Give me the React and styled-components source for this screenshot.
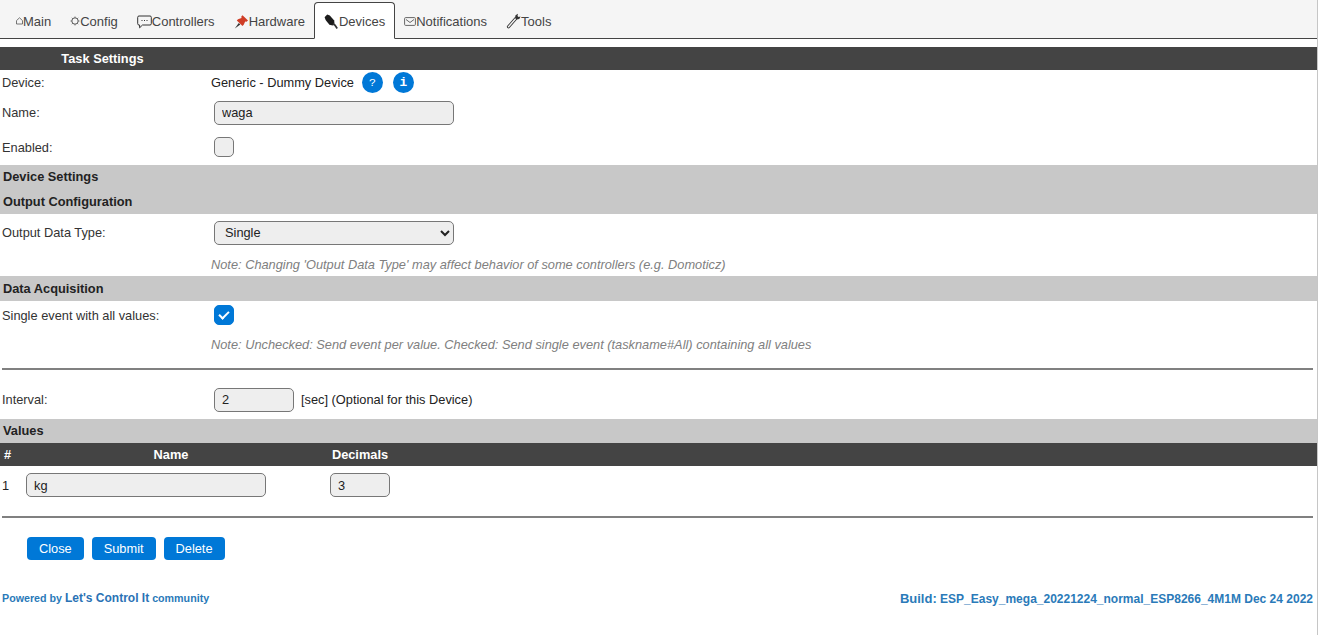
import React from "react";
import styled, { createGlobalStyle } from "styled-components";

const Global = createGlobalStyle`
  html, body { margin: 0; padding: 0; background: #fff; }
  body { font-family: "Liberation Sans", Arial, sans-serif; font-size: 12.8px; color: #111; overflow: hidden; }
  * { box-sizing: border-box; }
`;

const Page = styled.div`
  width: 1318px;
  height: 635px;
  border-right: 1px solid #c6c6c6;
  overflow: hidden;
`;

const TabBar = styled.nav`
  display: flex;
  align-items: flex-end;
  height: 39px;
  padding-left: 6px;
  background: #f5f5f5;
  border-bottom: 1px solid #444;
`;

const Tab = styled.a`
  display: flex;
  align-items: center;
  height: ${(p) => (p.$active ? "37px" : "36px")};
  margin-right: -1px;
  margin-bottom: ${(p) => (p.$active ? "-1px" : "0")};
  padding: ${(p) => (p.$active ? "2px" : "1px")} 9px 0;
  border: 1px solid ${(p) => (p.$active ? "#444" : "transparent")};
  border-bottom: ${(p) => (p.$active ? "1px solid #fff" : "0")};
  border-radius: 4px 4px 0 0;
  background: ${(p) => (p.$active ? "#fff" : "transparent")};
  color: #444;
  font-size: 13px;
  white-space: nowrap;
  cursor: pointer;
`;

const Glyph = styled.svg`
  flex: none;
  display: block;
`;

const Main = styled.main`
  padding-top: 8px;
`;

const DarkHeader = styled.div`
  display: grid;
  grid-template-columns: ${(p) => p.$columns};
  align-items: center;
  height: 23px;
  background: #444;
  color: #fff;
  font-weight: 700;
  font-size: 12.8px;
`;

const HeaderCell = styled.div`
  text-align: ${(p) => p.$align || "center"};
  padding-left: ${(p) => p.$pad || 0}px;
`;

const Section = styled.div`
  display: flex;
  align-items: center;
  height: ${(p) => p.$h || 25}px;
  padding: 0 0 ${(p) => (p.$h ? 2 : 0)}px 3px;
  background: #c8c8c8;
  color: #222;
  font-weight: 700;
  font-size: 12.8px;
`;

const Row = styled.div`
  display: grid;
  grid-template-columns: 212px 1fr;
  align-items: center;
  height: ${(p) => p.$h}px;
  padding-left: 2px;
  padding-top: ${(p) => p.$top || 0}px;
  padding-bottom: ${(p) => p.$bottom || 0}px;
`;

const Label = styled.label`
  color: #333;
  font-size: 12.8px;
`;

const Value = styled.div`
  display: flex;
  align-items: center;
  color: #222;
  margin-left: ${(p) => (p.$offset ? "-3px" : "0")};
`;

const TextInput = styled.input`
  display: block;
  width: ${(p) => p.$w}px;
  height: 24px;
  padding: 0 7px;
  border: 1px solid #777;
  border-radius: 5px;
  background: #eee;
  color: #222;
  font: 12.8px "Liberation Sans", Arial, sans-serif;
  outline: none;
`;

const Select = styled.select`
  display: block;
  width: 240px;
  height: 24px;
  padding: 0 6px;
  border: 1px solid #777;
  border-radius: 5px;
  background: #eee;
  color: #222;
  font: 12.8px "Liberation Sans", Arial, sans-serif;
`;

const CheckBox = styled.input.attrs({ type: "checkbox" })`
  appearance: none;
  display: grid;
  place-items: center;
  width: 20px;
  height: 20px;
  margin: 0;
  border: 1px solid ${(p) => (p.defaultChecked ? "#0078d7" : "#777")};
  border-radius: 5px;
  background: ${(p) => (p.defaultChecked ? "#0078d7" : "#eee")};

  &:checked::after {
    content: "";
    width: 4px;
    height: 8px;
    margin-top: -2px;
    border: solid #fff;
    border-width: 0 2px 2px 0;
    transform: rotate(45deg);
  }
`;

const RoundHelp = styled.a`
  display: flex;
  align-items: center;
  justify-content: center;
  width: 21px;
  height: 21px;
  margin-left: ${(p) => p.$gap}px;
  border-radius: 50%;
  background: #0078d7;
  color: #fff;
  font: ${(p) => (p.$light ? "400 11.5px" : "700 12.8px")} "Liberation Mono", monospace;
`;

const Note = styled.div`
  color: #808080;
  font-style: italic;
  font-size: 12.8px;
  margin-left: -3px;
`;

const Unit = styled.span`
  margin-left: 7px;
  color: #222;
  font-size: 12.8px;
`;

const Rule = styled.hr`
  height: 2px;
  margin: ${(p) => p.$y}px 4px 0 2px;
  border: 0;
  background: #808080;
`;

const ValueRow = styled.div`
  display: grid;
  grid-template-columns: 24px 294px 84px;
  align-items: center;
  height: 39px;
  padding-bottom: 1px;
`;

const Index = styled.div`
  padding-left: 2px;
  color: #222;
`;

const NameCell = styled.div`
  padding-left: 2px;
`;

const DecimalCell = styled.div`
  display: flex;
  justify-content: center;
`;

const Buttons = styled.div`
  display: flex;
  gap: 8px;
  margin-top: 19px;
  padding-left: 27px;
`;

const Button = styled.button`
  height: 23px;
  padding: 0 12px;
  border: 0;
  border-radius: 4px;
  background: #0078d7;
  color: #fff;
  font: 12.8px "Liberation Sans", Arial, sans-serif;
  cursor: pointer;
`;

const Footer = styled.footer`
  display: flex;
  justify-content: space-between;
  align-items: center;
  margin-top: 28px;
  padding: 0 4px 0 2px;
  height: 20px;
  font-weight: 700;
  color: #2a7ab9;
`;

const Powered = styled.div`
  font-size: 10.7px;
`;

const CommunityLink = styled.span`
  font-size: 12px;
  color: #2a72b5;
`;

const Build = styled.div`
  font-size: 12px;
`;

const BuildLabel = styled.span`
  font-size: 13px;
`;

const HouseIcon = () => (
  <Glyph width="7" height="8" viewBox="0 0 7 8" fill="none" stroke="#555" strokeWidth="0.8">
    <path d="M.5 3.600 3.500.8l3 2.800V7H.5z" />
  </Glyph>
);

const GearIcon = () => (
  <Glyph width="10" height="10" viewBox="0 0 10 10" fill="none" stroke="#555" strokeWidth="1">
    <circle cx="5" cy="5" r="3.200" />
    <path d="M5 .5v1.200M5 8.300v1.200M.5 5h1.200M8.300 5h1.200M1.800 1.800l.9.9M7.300 7.300l.9.9M1.800 8.200l.9-.9M7.300 2.700l.9-.9" strokeWidth="0.8" />
  </Glyph>
);

const ChatIcon = () => (
  <Glyph width="15" height="15" viewBox="0 0 15 15" fill="none" stroke="#333" strokeWidth="1">
    <path d="M2 2h11a1.300 1.300 0 0 1 1.300 1.300v6.400A1.300 1.300 0 0 1 13 11H5.500L2.600 13.800V11H2A1.300 1.300 0 0 1 .7 9.700V3.300A1.300 1.300 0 0 1 2 2z" />
    <path d="M4.500 6.500h1M7 6.500h1M9.500 6.500h1" strokeWidth="1.200" />
  </Glyph>
);

const PinIcon = () => (
  <Glyph width="15" height="15" viewBox="0 0 15 15">
    <path d="M.8 14.400 4.800 9l1.500 1.500z" fill="#333" />
    <path d="M8.500 1.200 14 6.500l-1.500 1.200-1.300-.2-1.500 3.300-1.200 1.300L2.800 6.500l1.200-1.200 3.500-1.200-.2-1.500z" fill="#cf3d26" />
  </Glyph>
);

const PlugIcon = () => (
  <Glyph width="15" height="15" viewBox="0 0 15 15">
    <path d="M.6 3.200 3.200.6l2.600 1 4.400 4.800.3 3.300-1.800 1.700-3.300-.6L1.600 6z" fill="#1c1c1c" />
    <path d="M8.800 9.800l2.200 1.400 2.200 3.300" fill="none" stroke="#333" strokeWidth="1.700" />
  </Glyph>
);

const MailIcon = () => (
  <Glyph width="12" height="9" viewBox="0 0 12 9" fill="none" stroke="#666" strokeWidth="1">
    <rect x=".6" y=".6" width="10.800" height="7.800" rx="1" />
    <path d="M2 2.500 6 5.500l4-3" />
  </Glyph>
);

const WrenchIcon = () => (
  <Glyph width="15" height="16" viewBox="0 0 15 16" fill="none">
    <path d="M2.500 13.800 10 5.200" stroke="#333" strokeWidth="3.200" strokeLinecap="round" />
    <path d="M2.500 13.800 10 5.200" stroke="#f2f2f2" strokeWidth="1.400" strokeLinecap="round" />
    <path d="M9.200 5.200 9.500 2.300 12 .8l-.5 2.300 1 1 2-.5-1.200 2.400-2.900.5z" fill="#333" />
  </Glyph>
);

const tabs = [
  ["Main", <HouseIcon key="i" />],
  ["Config", <GearIcon key="i" />],
  ["Controllers", <ChatIcon key="i" />],
  ["Hardware", <PinIcon key="i" />],
  ["Devices", <PlugIcon key="i" />, true],
  ["Notifications", <MailIcon key="i" />],
  ["Tools", <WrenchIcon key="i" />],
];

export default function App() {
  return (
    <Page>
      <Global />
      <TabBar>
        {tabs.map(([name, icon, active]) => (
          <Tab key={name} $active={active}>
            {icon}
            {name}
          </Tab>
        ))}
      </TabBar>
      <Main>
        <DarkHeader $columns="205px 1fr">
          <HeaderCell>Task Settings</HeaderCell>
          <HeaderCell />
        </DarkHeader>
        <Row $h={25}>
          <Label>Device:</Label>
          <Value $offset>
            Generic - Dummy Device
            <RoundHelp $gap={8} $light>?</RoundHelp>
            <RoundHelp $gap={10}>i</RoundHelp>
          </Value>
        </Row>
        <Row $h={35}>
          <Label>Name:</Label>
          <Value>
            <TextInput $w={240} defaultValue="waga" />
          </Value>
        </Row>
        <Row $h={35} $bottom={1}>
          <Label>Enabled:</Label>
          <Value>
            <CheckBox />
          </Value>
        </Row>
        <Section $h={24}>Device Settings</Section>
        <Section>Output Configuration</Section>
        <Row $h={37}>
          <Label>Output Data Type:</Label>
          <Value>
            <Select defaultValue="Single">
              <option>Single</option>
            </Select>
          </Value>
        </Row>
        <Row $h={25} $top={1}>
          <span />
          <Note>Note: Changing 'Output Data Type' may affect behavior of some controllers (e.g. Domoticz)</Note>
        </Row>
        <Section>Data Acquisition</Section>
        <Row $h={29} $bottom={1}>
          <Label>Single event with all values:</Label>
          <Value>
            <CheckBox defaultChecked />
          </Value>
        </Row>
        <Row $h={28}>
          <span />
          <Note>Note: Unchecked: Send event per value. Checked: Send single event (taskname#All) containing all values</Note>
        </Row>
        <Rule $y={10} />
        <Row $h={49} $top={10}>
          <Label>Interval:</Label>
          <Value>
            <TextInput $w={80} defaultValue="2" />
            <Unit>[sec] (Optional for this Device)</Unit>
          </Value>
        </Row>
        <Section $h={24}>Values</Section>
        <DarkHeader $columns="24px 294px 84px">
          <HeaderCell $align="left" $pad={4}>#</HeaderCell>
          <HeaderCell>Name</HeaderCell>
          <HeaderCell>Decimals</HeaderCell>
        </DarkHeader>
        <ValueRow>
          <Index>1</Index>
          <NameCell>
            <TextInput $w={240} defaultValue="kg" />
          </NameCell>
          <DecimalCell>
            <TextInput $w={60} defaultValue="3" />
          </DecimalCell>
        </ValueRow>
        <Rule $y={11} />
        <Buttons>
          <Button>Close</Button>
          <Button>Submit</Button>
          <Button>Delete</Button>
        </Buttons>
        <Footer>
          <Powered>
            Powered by <CommunityLink>Let's Control It</CommunityLink> community
          </Powered>
          <Build>
            <BuildLabel>Build:</BuildLabel> ESP_Easy_mega_20221224_normal_ESP8266_4M1M Dec 24 2022
          </Build>
        </Footer>
      </Main>
    </Page>
  );
}
